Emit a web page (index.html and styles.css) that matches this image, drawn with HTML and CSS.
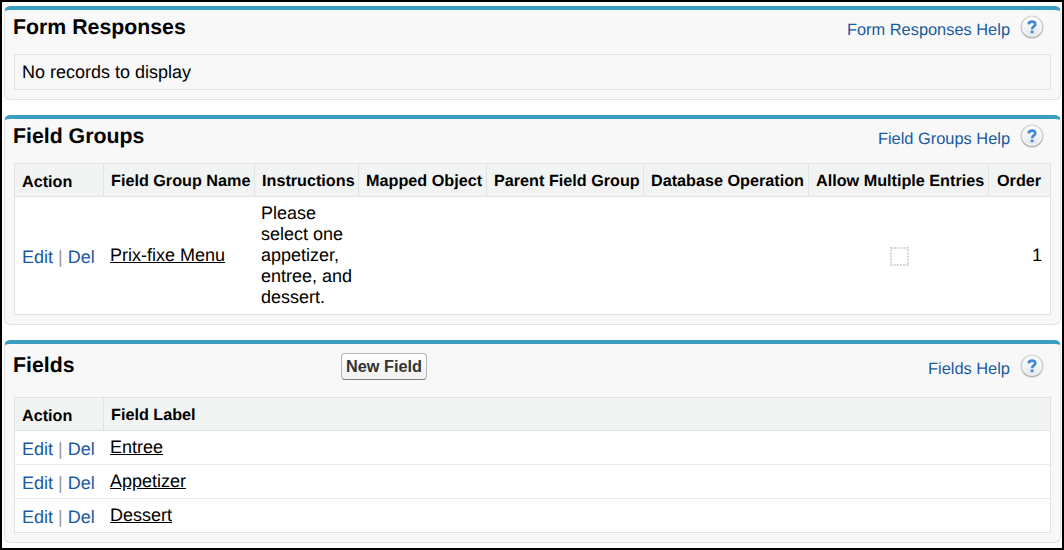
FILE: index.html
```html
<!DOCTYPE html>
<html lang="en">
<head>
<meta charset="utf-8">
<title>Form Detail</title>
<link rel="stylesheet" href="styles.css">
</head>
<body>
<svg class="defs" width="0" height="0" aria-hidden="true">
  <defs>
    <linearGradient id="ring" x1="0" y1="0" x2="0" y2="1"><stop offset="0" stop-color="#d9d9d9"/><stop offset="1" stop-color="#bcbcbc"/></linearGradient>
    <linearGradient id="face" x1="0" y1="0" x2="0" y2="1"><stop offset="0" stop-color="#ffffff"/><stop offset="1" stop-color="#e4e7ec"/></linearGradient>
    <symbol id="help" viewBox="0 0 24 24">
      <circle cx="12" cy="12" r="11.5" fill="url(#ring)"/>
      <circle cx="12" cy="11.7" r="10" fill="#fcfcfc"/>
      <circle cx="12" cy="12" r="8.8" fill="url(#face)"/>
      <path d="M8.6 9.3C8.8 7.4 10.1 6.6 12 6.6c2.100 0 3.300 1 3.300 2.600 0 2.400-3.200 2.400-3.200 5" fill="none" stroke="#3d86d8" stroke-width="2.600"/>
      <rect x="10.700" y="15.600" width="2.800" height="2.600" fill="#3d86d8"/>
    </symbol>
  </defs>
</svg>
<main class="page">
  <section class="panel responses">
    <header class="head">
      <h2 class="title">Form Responses</h2>
      <a class="help">Form Responses Help</a>
      <svg class="icon"><use href="#help"/></svg>
    </header>
    <div class="empty">No records to display</div>
  </section>

  <section class="panel groups">
    <header class="head">
      <h2 class="title">Field Groups</h2>
      <a class="help">Field Groups Help</a>
      <svg class="icon"><use href="#help"/></svg>
    </header>
    <div class="table">
      <div class="row labels">
        <div class="th action">Action</div>
        <div class="th">Field Group Name</div>
        <div class="th">Instructions</div>
        <div class="th">Mapped Object</div>
        <div class="th">Parent Field Group</div>
        <div class="th">Database Operation</div>
        <div class="th">Allow Multiple Entries</div>
        <div class="th order">Order</div>
      </div>
      <div class="row record">
        <div class="td actions"><a>Edit</a> | <a>Del</a></div>
        <div class="td"><a class="name">Prix-fixe Menu</a></div>
        <div class="td">Please select one appetizer, entree, and dessert.</div>
        <div class="td"></div>
        <div class="td"></div>
        <div class="td"></div>
        <div class="td center"><svg class="check" viewBox="0 0 19 19"><rect x="1" y="1" width="17" height="17" fill="#fff" stroke="#d2d2d2" stroke-width="2" stroke-dasharray="1.800 1.290"/></svg></div>
        <div class="td number">1</div>
      </div>
    </div>
  </section>

  <section class="panel fields">
    <header class="head">
      <h2 class="title">Fields</h2>
      <button class="button">New Field</button>
      <a class="help">Fields Help</a>
      <svg class="icon"><use href="#help"/></svg>
    </header>
    <div class="table">
      <div class="row labels">
        <div class="th action">Action</div>
        <div class="th">Field Label</div>
      </div>
      <div class="row record">
        <div class="td actions"><a>Edit</a> | <a>Del</a></div>
        <div class="td"><a class="name">Entree</a></div>
      </div>
      <div class="row record">
        <div class="td actions"><a>Edit</a> | <a>Del</a></div>
        <div class="td"><a class="name">Appetizer</a></div>
      </div>
      <div class="row record">
        <div class="td actions"><a>Edit</a> | <a>Del</a></div>
        <div class="td"><a class="name">Dessert</a></div>
      </div>
    </div>
  </section>
</main>
</body>
</html>
```
FILE: styles.css
```css
* { box-sizing: border-box; }
body {
  margin: 0;
  background: #fff;
  color: #000;
  font: 18px/21px "Liberation Sans", Arial, sans-serif;
  text-rendering: geometricPrecision;
}
.defs { display: block; }
.page {
  width: 1064px;
  height: 550px;
  border: 2px solid #000;
  padding: 4px 1px 0 2px;
  display: flex;
  flex-direction: column;
  gap: 15px;
}
.panel {
  background: #f8f8f8;
  border: 1px solid #e0e3e5;
  border-top: 4px solid #3a9dc2;
  border-radius: 6px;
  padding: 0 9px;
}
.responses { height: 94px; }
.groups { height: 210px; }
.fields { height: 203px; }
.head {
  display: flex;
  align-items: flex-start;
  height: 44px;
  margin-left: -1px;
  padding-right: 7px;
}
.fields .head { height: 53px; }
.title {
  flex: 1;
  margin: 0;
  padding-top: 4px;
  font-size: 21.300px;
  line-height: 26px;
}
.help {
  padding-top: 10px;
  color: #1a5a9f;
  font-size: 16.400px;
  line-height: 20px;
}
.icon { width: 24px; height: 24px; margin: 5px 0 0 10px; }
.fields .title { flex: 0 0 328px; padding-top: 8px; }
.fields .help { margin-left: auto; padding-top: 15px; }
.fields .icon { margin-top: 10px; }
.button {
  width: 86px;
  height: 27px;
  margin-top: 9px;
  padding: 0;
  border: 1px solid #b5b5b5;
  border-bottom-color: #7f7f7f;
  border-radius: 4px;
  background: linear-gradient(#fff, #f0f0f0);
  color: #333;
  font: bold 16.300px/25px "Liberation Sans", Arial, sans-serif;
  white-space: nowrap;
}
.empty {
  height: 36px;
  border: 1px solid #e0e3e5;
  padding: 7px 7px 0;
}
.table { border: 1px solid #e0e3e5; background: #fff; }
.groups .row {
  display: grid;
  grid-template-columns: 88px 151px 104px 128px 157px 165px 180px 1fr;
}
.fields .row { display: grid; grid-template-columns: 88px 1fr; }
.labels {
  height: 33px;
  background: #f2f3f3;
  border-bottom: 1px solid #e0e3e5;
}
.th {
  padding: 7px 0 0 7px;
  border-left: 1px solid #e0e3e5;
  font-size: 16.200px;
  font-weight: bold;
  line-height: 20px;
  white-space: nowrap;
}
.th.action { border-left: 0; padding-top: 8px; }
.th.order { padding-left: 8px; }
.td { padding-left: 7px; }
.groups .record { height: 117px; align-items: center; }
.fields .record { height: 33px; padding-top: 6px; }
.fields .record + .record { border-top: 1px solid #e9ebec; height: 34px; }
.actions { padding-top: 2px; color: #999; white-space: nowrap; }
.actions a { color: #1a5a9f; }
.groups .actions { padding-top: 4px; }
.name { text-decoration: underline; }
.center { display: flex; justify-content: center; padding: 1px 0 0 3px; }
.check { width: 19px; height: 19px; }
.number { padding-right: 8px; text-align: right; }
```
